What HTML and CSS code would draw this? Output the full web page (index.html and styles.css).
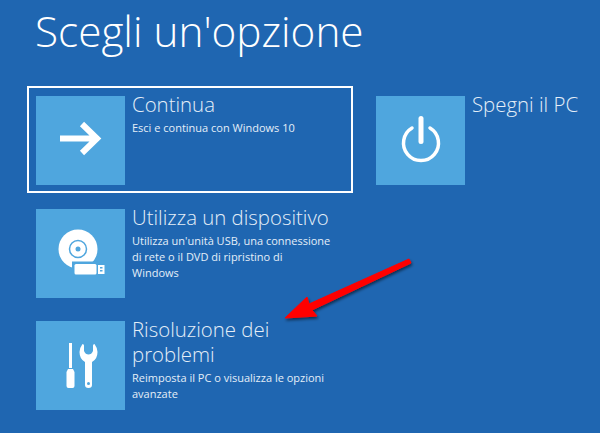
FILE: index.html
```html
<!DOCTYPE html>
<html lang="it">

<head>
    <meta charset="UTF-8">
    <title>Scegli un'opzione</title>
    <link rel="stylesheet" href="styles.css">
</head>

<body>
    <h1 class="title">Scegli un'opzione</h1>

    <div class="columns">
        <div class="column">
            <div class="option selected">
                <div class="tile">
                    <svg width="89" height="89" viewBox="0 0 89 89">
                        <path d="M24 42.500h38M46 28l15 14.500-15 14.500" fill="none" stroke="#fff" stroke-width="6"/>
                    </svg>
                </div>
                <div class="info">
                    <div class="name">Continua</div>
                    <div class="desc">Esci e continua con Windows 10</div>
                </div>
            </div>

            <div class="option">
                <div class="tile">
                    <svg width="89" height="89" viewBox="0 0 89 89">
                        <circle cx="42" cy="40" r="19.500" fill="#fff"/>
                        <circle cx="42" cy="40" r="8.500" fill="none" stroke="#4fa6de" stroke-width="1.500"/>
                        <circle cx="42" cy="40" r="2.500" fill="#4fa6de"/>
                        <rect x="36" y="52.500" width="27" height="15" fill="#4fa6de"/>
                        <rect x="38.500" y="55" width="22" height="10.500" rx="1.500" fill="#fff"/>
                        <rect x="62" y="56" width="6.500" height="9" fill="#fff"/>
                        <rect x="64" y="58" width="2.500" height="1.500" fill="#4fa6de"/>
                        <rect x="64" y="61" width="2.500" height="1.500" fill="#4fa6de"/>
                    </svg>
                </div>
                <div class="info">
                    <div class="name">Utilizza un dispositivo</div>
                    <div class="desc">Utilizza un'unità USB, una connessione di rete o il DVD di ripristino di<br>Windows</div>
                </div>
            </div>

            <div class="option">
                <div class="tile">
                    <svg width="89" height="89" viewBox="0 0 89 89">
                        <path d="M33 22h3v25h-3zM32 48h5l1.500 3v14q0 2-2 2h-4q-2 0-2-2v-14z" fill="#fff"/>
                        <path d="M46.500 23q-3 4-3 8 0 7 5.500 10v23q0 3 3.500 3t3.500-3v-23q5.500-3 5.500-10 0-4-3-8-1.500 0-1.500 1.500v5.500q-1.500 3.500-4.500 3.500t-4.500-3.500v-5.500q0-1.500-1.500-1.500z" fill="#fff"/>
                        <circle cx="52.500" cy="62.500" r="1.500" fill="#4fa6de"/>
                    </svg>
                </div>
                <div class="info">
                    <div class="name">Risoluzione dei problemi</div>
                    <div class="desc">Reimposta il PC o visualizza le opzioni avanzate</div>
                </div>
            </div>
        </div>

        <div class="column side">
            <div class="option">
                <div class="tile">
                    <svg width="89" height="89" viewBox="0 0 89 89">
                        <path d="M36 32a17.500 17.500 0 1 0 18 0" fill="none" stroke="#fff" stroke-width="3.500" stroke-linecap="round"/>
                        <path d="M45 22.500v23" fill="none" stroke="#fff" stroke-width="5" stroke-linecap="round"/>
                    </svg>
                </div>
                <div class="info">
                    <div class="name">Spegni il PC</div>
                </div>
            </div>
        </div>
    </div>

    <!-- freccia rossa sopra la pagina -->
    <svg class="red-arrow" width="140" height="70" viewBox="0 0 140 70">
        <defs>
            <filter id="arrowShadow" x="-20%" y="-20%" width="140%" height="150%">
                <feDropShadow dx="1" dy="2" stdDeviation="1.500" flood-color="#000" flood-opacity="0.55"/>
            </filter>
        </defs>
        <path d="M130 5l2 4-99 47 5 6-32 2 22-21 2 7z" fill="#f00" stroke="#f00" stroke-width="1" stroke-linejoin="round" filter="url(#arrowShadow)"/>
    </svg>
</body>

</html>
```

FILE: styles.css
```css
/* pagina opzioni di ripristino */
body {
    background-color: #1f66b1;
    color: #fff;
    font-family: 'Open Sans', 'Liberation Sans', sans-serif;
    margin: 0;
    height: 433px;
    overflow: hidden;
    position: relative;
}

.title {
    font-size: 42.300px;
    font-weight: 300;
    line-height: 58px;
    margin: 0;
    padding: 2px 0 0 35px;
    height: 84px;
}

.columns {
    display: flex;
    padding-left: 27px;
}

.column {
    display: flex;
    flex-direction: column;
    flex: none;
    width: 340px;
}

.column.side {
    width: 233px;
}

.option {
    display: flex;
    gap: 7px;
    border: 2px solid transparent;
    padding: 8px 7px;
    height: 107px;
    box-sizing: border-box;
    margin-bottom: 5.500px;
    width: 326px;
}

.side .option {
    width: 233px;
}

.option.selected {
    border-color: #fff;
}

.tile {
    background-color: #4fa6de;
    width: 89px;
    height: 89px;
    flex-shrink: 0;
}

.tile svg {
    display: block;
}

.info {
    width: 206px;
    margin-top: -4px;
    color: #e4eef8;
}

.name {
    font-size: 20.400px;
    font-weight: 300;
    line-height: 25px;
}

.desc {
    font-size: 11px;
    line-height: 16px;
    margin-top: 3px;
}

.red-arrow {
    position: absolute;
    left: 279px;
    top: 254px;
}
```
